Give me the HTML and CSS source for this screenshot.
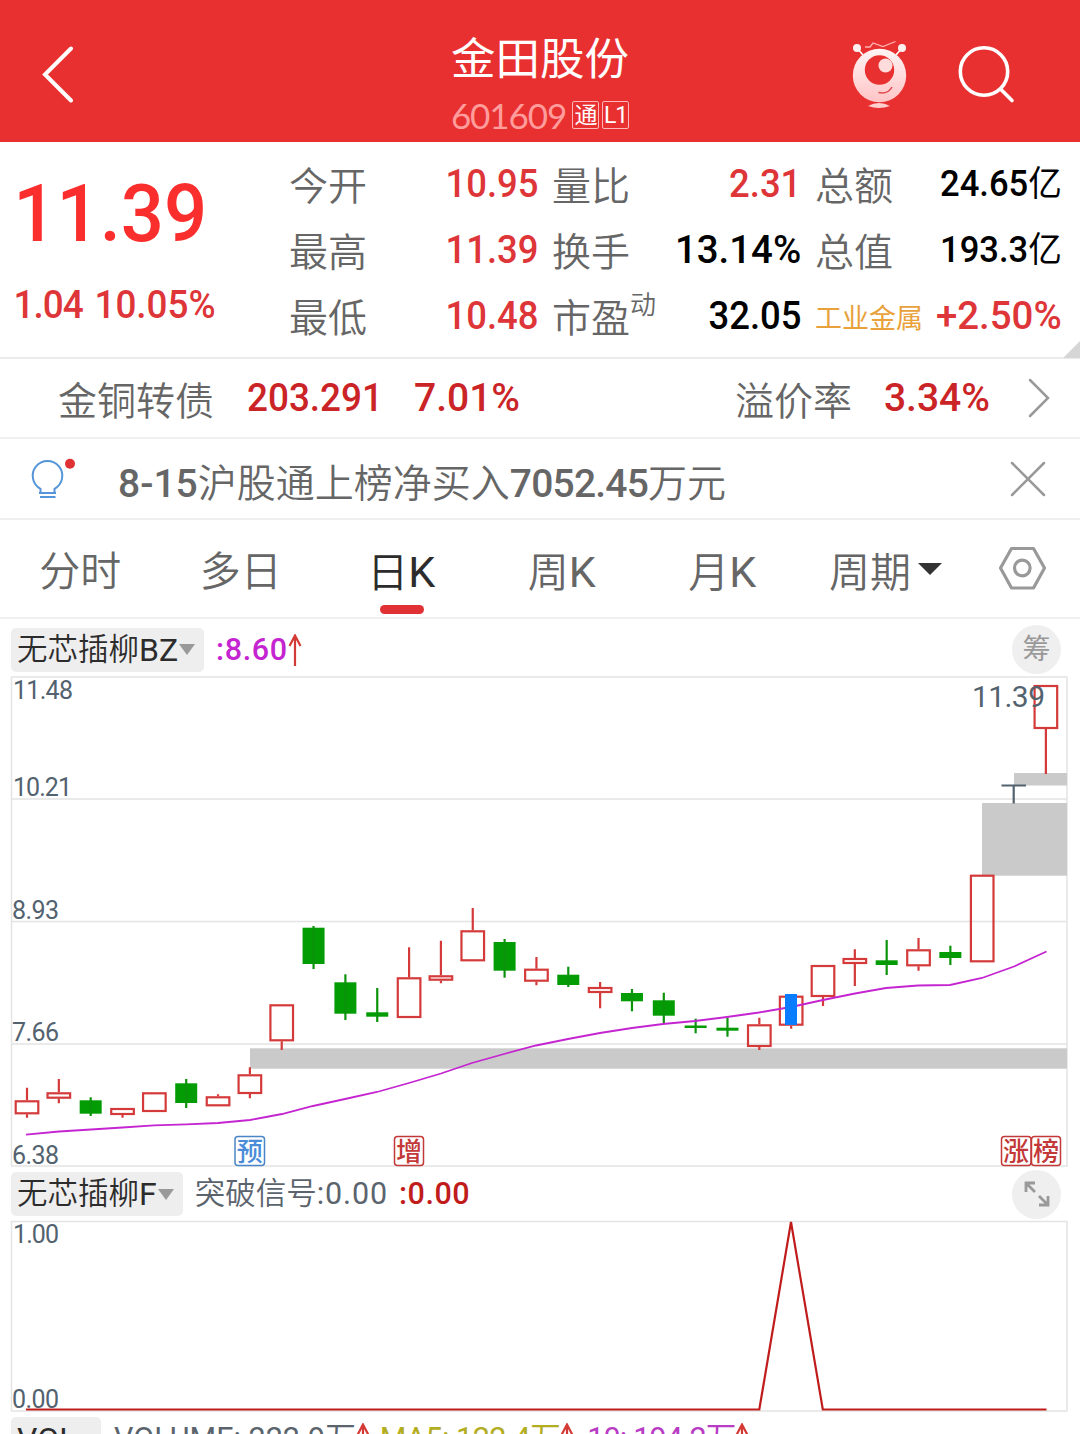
FILE: index.html
```
<!DOCTYPE html>
<html lang="zh-CN">
<head>
    <meta charset="utf-8">
    <title>金田股份 601609</title>
    <link rel="stylesheet" href="styles.css">
</head>
<body>
<div class="app">
    <header class="topbar">
        <svg class="back" width="34" height="60" viewBox="0 0 34 60"><path d="M31 5.500 L5 31.500 L31 57.500"/></svg>
        <div class="title">
            <div class="name">金田股份</div>
            <div class="code"><span class="code-num">601609</span><span class="tag">通</span><span class="tag">L1</span></div>
        </div>
        <div class="tools">
            <svg width="60" height="72" viewBox="850 38 60 72">
                <defs>
                    <linearGradient id="face" x1="0" y1="0" x2="0" y2="1">
                        <stop offset="0" stop-color="#fff4f4"/>
                        <stop offset="1" stop-color="#ffc4c6"/>
                    </linearGradient>
                </defs>
                <path d="M865 47 L870 47 L873 43 L883 46.5 L895.5 41.5" fill="none" stroke="#ffb3b3" stroke-width="1.3"/>
                <path d="M857 48 L863 55 M902 48 L896 55" stroke="#fff" stroke-width="1.6"/>
                <circle cx="857" cy="48" r="4" fill="#fff0f0"/>
                <circle cx="902" cy="48" r="4" fill="#fff0f0"/>
                <circle cx="879.5" cy="75.5" r="26.7" fill="url(#face)"/>
                <circle cx="879.5" cy="70" r="14.7" fill="#e93030"/>
                <circle cx="885.5" cy="65.5" r="7" fill="#ffdcdc"/>
                <path d="M878.5 92.5 Q888 94.5 892 87" fill="none" stroke="#e04a4c" stroke-width="1.5"/>
                <path d="M868 106 Q879 100 890 106 Q879 110 868 106" fill="#ffcfd0"/>
            </svg>
            <svg width="62" height="62" viewBox="955 42 62 62" class="search"><circle cx="984" cy="71.5" r="23.7"/><path d="M1000.5 89 L1012 100.5"/></svg>
        </div>
    </header>

    <section class="quote">
        <div class="price">
            <div class="last">11.39</div>
            <div class="change"><span class="diff">1.04</span><span>10.05%</span></div>
        </div>
        <div class="grid">
            <div class="cell"><span>今开</span><b class="up">10.95</b></div>
            <div class="cell"><span>量比</span><b class="up">2.31</b></div>
            <div class="cell"><span>总额</span><b class="small">24.65<i>亿</i></b></div>
            <div class="cell"><span>最高</span><b class="up">11.39</b></div>
            <div class="cell"><span>换手</span><b class="pct">13.14%</b></div>
            <div class="cell"><span>总值</span><b class="small">193.3<i>亿</i></b></div>
            <div class="cell"><span>最低</span><b class="up">10.48</b></div>
            <div class="cell"><span>市盈<sup>动</sup></span><b>32.05</b></div>
            <div class="cell"><span class="industry">工业金属</span><b class="up pct">+2.50%</b></div>
        </div>
        <div class="corner"></div>
    </section>

    <section class="bond">
        <span>金铜转债</span>
        <b class="bond-price">203.291</b>
        <b class="bond-rate">7.01%</b>
        <span class="premium">溢价率</span>
        <b class="premium-num">3.34%</b>
        <svg width="24" height="42" viewBox="0 0 24 42"><path d="M3 3 L21 21 L3 39"/></svg>
    </section>

    <section class="notice">
        <svg width="46" height="44" viewBox="30 456 46 44">
            <path d="M40.500 491.500 V487.800 A14.800 14.800 0 1 1 54.500 487.800 V491.500 M39 492 H56 M40 496 H55.500" fill="none" stroke="#5595d9" stroke-width="2"/>
            <circle cx="70" cy="462.700" r="5" fill="#e03235"/>
        </svg>
        <p><b>8-15</b>沪股通上榜净买入<b class="amount">7052.45</b>万元</p>
        <svg class="close" width="38" height="38" viewBox="0 0 38 38"><path d="M3 3 L35 35 M35 3 L3 35"/></svg>
    </section>

    <nav class="tabs">
        <span>分时</span>
        <span>多日</span>
        <span class="active">日<b>K</b></span>
        <span>周<b>K</b></span>
        <span>月<b>K</b></span>
        <span class="period">周期<svg width="24" height="12" viewBox="0 0 24 12"><path d="M0 0 H24 L12 12 Z" fill="#333"/></svg></span>
        <svg class="gear" width="50" height="46" viewBox="997 545 50 46"><path d="M1011.500 548.500 H1033.500 L1044.500 568 L1033.500 588 H1011.500 L1000.500 568 Z"/><circle cx="1022.300" cy="568" r="7.800"/></svg>
    </nav>

    <div class="indicator">
        <span class="pill">无芯插柳<b>BZ</b><i></i></span>
        <b class="ma">:8.60</b>
        <svg class="arrow" width="14" height="32" viewBox="0 0 14 32"><path d="M7 32 V2 M1.500 12 L7 1.500 L12.500 12"/></svg>
        <span class="round">筹</span>
    </div>

    <svg class="chart" width="1080" height="491" viewBox="0 676 1080 491">
        <g class="frame">
            <path d="M11.500 677 V1166 H1067 V677 Z M11 799 H1067 M11 921.500 H1067 M11 1044 H1067"/>
        </g>
        <g fill="#cacaca">
            <rect x="250" y="1048.300" width="817" height="20.400"/>
            <rect x="982" y="803" width="85" height="72.700"/>
            <rect x="1014" y="773" width="53" height="12.500"/>
        </g>
        <g id="candles"></g>
        <path d="M1001.500 785.500 H1026 M1013.700 785.500 V803.500" stroke="#53626f" stroke-width="2.200"/>
        <path class="ma-line" d="M26 1134.700 L59 1131.500 91 1129.500 122.500 1127.500 154 1125.300 186 1124.300 218 1123 250 1120 282 1114 313 1106 345 1099 377 1092 409 1083 441 1073.500 472 1063 504 1054 536 1045.500 568 1039 600 1033 632 1028 663 1024 695 1021 727 1017 759 1012.500 791 1007 823 1000 855 993.500 886 988 918 985.500 950 985 982 978 1014 966.500 1046.500 951.500"/>
        <rect x="785" y="994" width="12" height="31" fill="#0a7cff"/>
        <g class="axis">
            <text x="13" y="699" textLength="60">11.48</text>
            <text x="13" y="796" textLength="59">10.21</text>
            <text x="12" y="919" textLength="47">8.93</text>
            <text x="12" y="1041" textLength="47">7.66</text>
            <text x="12" y="1164" textLength="47">6.38</text>
            <text x="972" y="706.500" textLength="73" class="peak">11.39</text>
        </g>
        <g class="marks">
            <rect class="blue" x="235" y="1136.500" width="29.500" height="29" rx="3"/><text class="blue" x="249.700" y="1160.500">预</text>
            <rect x="394.500" y="1136.500" width="29" height="29" rx="3"/><text x="409" y="1160.500">增</text>
            <rect x="1001.500" y="1136.500" width="29.500" height="29" rx="3"/><text x="1016" y="1160.500">涨</text>
            <rect x="1031.500" y="1136.500" width="29" height="29" rx="3"/><text x="1046" y="1160.500">榜</text>
        </g>
    </svg>

    <div class="indicator second">
        <span class="pill">无芯插柳<b>F</b><i></i></span>
        <span class="signal">突破信号<b>:0.00</b></span>
        <b class="zero">:0.00</b>
        <span class="round"><svg width="28" height="28" viewBox="0 0 28 28"><path d="M3 12 V3 H12 M4 4 L12 12 M25 16 V25 H16 M24 24 L16 16"/></svg></span>
    </div>

    <svg class="chart" width="1080" height="191" viewBox="0 1221 1080 191">
        <g class="frame"><path d="M11.500 1221.500 H1067 V1411 H11.500 Z"/></g>
        <g class="axis">
            <text x="13" y="1242.700" textLength="46">1.00</text>
            <text x="12" y="1407.500" textLength="47">0.00</text>
        </g>
        <path d="M26 1409.500 H759.300 L791 1222 L822.800 1409.500 H1046.500" fill="none" stroke="#c01c1c" stroke-width="2.200"/>
    </svg>

    <div class="indicator volume">
        <span class="pill"><b>VOL</b></span>
        <span class="vol-text">VOLUME: 222.9万</span>
        <svg class="arrow" width="14" height="32" viewBox="0 0 14 32"><path d="M7 32 V2 M1.500 12 L7 1.500 L12.500 12"/></svg>
        <span class="vol-text ma5">MA5: 122.4万</span>
        <svg class="arrow" width="14" height="32" viewBox="0 0 14 32"><path d="M7 32 V2 M1.500 12 L7 1.500 L12.500 12"/></svg>
        <span class="vol-text ma10">10: 194.2万</span>
        <svg class="arrow" width="14" height="32" viewBox="0 0 14 32"><path d="M7 32 V2 M1.500 12 L7 1.500 L12.500 12"/></svg>
    </div>
</div>

<script>
    // direction, wick top, body top, body bottom, wick bottom
    const candles = [
        ["r", 1087.7, 1100.3, 1114.3, 1117.7],
        ["r", 1079, 1092.3, 1098.7, 1103.3],
        ["g", 1097.3, 1100.3, 1113.7, 1116],
        ["r", 1108, 1108, 1115, 1117.7],
        ["r", 1092.3, 1092.3, 1112, 1112],
        ["g", 1079, 1083.3, 1103, 1108],
        ["r", 1094.3, 1096.3, 1106.3, 1106.3],
        ["r", 1067.3, 1074.3, 1094, 1098.3],
        ["r", 1004.3, 1004.3, 1041.3, 1050],
        ["g", 926, 927.7, 964, 969],
        ["g", 974.3, 982.3, 1013.7, 1020],
        ["g", 988, 1012.3, 1016.7, 1022],
        ["r", 947.3, 977.3, 1018, 1018],
        ["r", 940.7, 975.3, 980.7, 983.3],
        ["r", 908, 930.3, 961.3, 961.3],
        ["g", 939, 942, 970.7, 977.7],
        ["r", 957, 968.7, 981.7, 985.3],
        ["g", 966.7, 974.7, 985, 987],
        ["r", 982, 987, 993, 1008.3],
        ["g", 989, 993, 1001.3, 1011.3],
        ["g", 992.7, 1000.3, 1015.7, 1023.3],
        ["g", 1018.7, 1025.5, 1028, 1033.3],
        ["g", 1018, 1027.7, 1030.7, 1036.7],
        ["r", 1017.7, 1024.3, 1047, 1050],
        ["r", 995.7, 995.7, 1025.7, 1028.7],
        ["r", 965, 965, 997, 1006],
        ["r", 949.3, 958, 964, 986],
        ["g", 940, 960.3, 965, 975],
        ["r", 938, 949.3, 966.3, 970.7],
        ["g", 945.7, 952, 958, 965],
        ["r", 874.7, 874.7, 962.3, 962.3],
        null,
        ["r", 685, 685, 729, 774]
    ];
    let out = "";
    candles.forEach((c, i) => {
        if (!c) return;
        const x = 27 + i * 31.84;
        const [dir, high, top, bottom, low] = c;
        if (dir === "g") {
            out += `<rect class="down" x="${x - 11}" y="${top}" width="22" height="${bottom - top}"/>`;
            out += `<path class="wick down" d="M${x} ${high} V${low}"/>`;
        } else {
            out += `<path class="wick" d="M${x} ${high} V${top} M${x} ${bottom} V${low}"/>`;
            out += `<rect class="rise" x="${x - 11.3}" y="${top + 1}" width="22.6" height="${bottom - top - 2}"/>`;
        }
    });
    document.getElementById("candles").innerHTML = out;
</script>
</body>
</html>
```
FILE: styles.css
```
* {
    box-sizing: border-box;
}

body {
    margin: 0;
    background: #fff;
    font-family: Roboto, "Noto Sans CJK SC", sans-serif;
    font-weight: 350;
    color: #666;
}

b {
    font-weight: 500;
}

i {
    font-style: normal;
}

svg {
    display: block;
    flex: none;
}

.app {
    width: 1080px;
    height: 1434px;
    overflow: hidden;
}

.topbar {
    height: 142px;
    background: #e83030;
    display: grid;
    grid-template-columns: 400px 280px 400px;
    color: #fff;
}

.back {
    margin: 43px 0 0 40px;
    fill: none;
    stroke: #fff;
    stroke-width: 4;
    stroke-linecap: round;
}

.title {
    display: flex;
    flex-direction: column;
    align-items: center;
    padding-top: 29px;
}

.name {
    font-size: 44.5px;
    line-height: 62px;
    font-weight: 400;
}

.code {
    display: flex;
    align-items: center;
    height: 48px;
    gap: 3px;
}

.code-num {
    font-family: Lato, sans-serif;
    font-weight: 400;
    font-size: 35px;
    letter-spacing: -1.1px;
    color: #ff9c9c;
    margin-right: 3px;
}

.tag {
    width: 27px;
    height: 28px;
    border: 1px solid #ffb5b5;
    border-radius: 2px;
    font-size: 23px;
    line-height: 27px;
    text-align: center;
    font-weight: 400;
    letter-spacing: -1px;
}

.tools {
    display: flex;
    gap: 45px;
    padding: 38px 0 0 170px;
}

.search {
    margin-top: 4px;
    fill: none;
    stroke: #fff;
    stroke-width: 3.6;
    stroke-linecap: round;
}

.quote {
    height: 217px;
    display: flex;
    border-bottom: 2px solid #ebebeb;
    position: relative;
}

.price {
    width: 289px;
    color: #fb2e2e;
    font-weight: 500;
}

.last {
    font-size: 80px;
    line-height: 100px;
    padding: 22px 0 0 14px;
    transform: scaleX(.95);
    transform-origin: left;
}

.change {
    display: flex;
    gap: 12px;
    font-size: 38px;
    line-height: 60px;
    padding: 11px 0 0 14px;
    color: #de3539;
    transform: scaleX(.97);
    transform-origin: left;
}

.change .diff {
    letter-spacing: -1px;
}

.grid {
    display: grid;
    grid-template-columns: 249px 249px 247px;
    grid-auto-rows: 66px;
    column-gap: 14px;
    padding-top: 9px;
}

.cell {
    display: flex;
    justify-content: space-between;
    font-size: 39px;
    line-height: 66px;
    white-space: nowrap;
}

.cell span {
    padding-top: 3px;
}

.cell b {
    color: #000;
    transform: scaleX(.935);
    transform-origin: right;
}

.cell b.pct {
    transform: scaleX(.985);
}

.cell b.up {
    color: #de3539;
}

.cell b.small {
    font-size: 36px;
    transform: scaleX(.96);
}

.small i {
    font-size: 35px;
    font-weight: 400;
}

.cell sup {
    font-size: 26px;
    line-height: 0;
    vertical-align: 18px;
}

.cell .industry {
    font-size: 27px;
    font-weight: 400;
    color: #e9a13b;
}

.corner {
    position: absolute;
    right: 0;
    bottom: -1px;
    border-left: 17px solid transparent;
    border-bottom: 17px solid #d6d6d6;
}

.bond {
    height: 80px;
    border-bottom: 2px solid #f0f0f0;
    display: flex;
    align-items: center;
    font-size: 39px;
    padding: 0 29px 0 58px;
}

.bond b {
    color: #cb2427;
    transform-origin: left;
}

.bond .bond-price {
    width: 134px;
    margin: 0 33px;
    transform: scaleX(.945);
}

.premium {
    margin-left: auto;
}

.premium-num {
    margin: 0 37px 0 32px;
}

.bond path,
.close path {
    fill: none;
    stroke: #999;
    stroke-width: 2.5;
    stroke-linecap: round;
}

.notice {
    height: 81px;
    border-bottom: 2px solid #f0f0f0;
    display: flex;
    align-items: center;
    padding: 0 33px 0 30px;
}

.notice p {
    margin: 10px auto 0 42px;
    font-size: 39px;
    line-height: 60px;
    white-space: nowrap;
}

.notice .amount {
    letter-spacing: -.8px;
}

.tabs {
    height: 99px;
    border-bottom: 2px solid #f0f0f0;
    display: grid;
    grid-template-columns: 160.500px 160.500px 160.500px 160.500px 160.500px 166px 112px;
    font-size: 41px;
    line-height: 89px;
    text-align: center;
}

.tabs span {
    padding-top: 8px;
}

.tabs b {
    font-weight: 400;
    font-size: 43px;
}

.tabs .active {
    color: #2c2c2c;
    position: relative;
}

.active::after {
    content: "";
    position: absolute;
    left: 59px;
    bottom: 4px;
    width: 44px;
    height: 9px;
    border-radius: 5px;
    background: #e03235;
}

.period {
    display: flex;
    justify-content: center;
    align-items: center;
    gap: 7px;
}

.period svg {
    margin-bottom: 9px;
}

.gear {
    margin: 25px 0 0 28px;
    fill: none;
    stroke: #999;
    stroke-width: 3.2;
    stroke-linejoin: round;
}

.indicator {
    height: 57px;
    padding: 4px 19px 0 11px;
    display: flex;
    align-items: center;
    font-size: 30.500px;
    line-height: 44px;
    white-space: nowrap;
}

.pill {
    height: 44px;
    background: #eee;
    border-radius: 5px;
    padding: 0 9px 0 6px;
    color: #2c2c2c;
    display: flex;
    align-items: center;
}

.pill b {
    font-weight: 400;
    font-size: 32px;
}

.pill i {
    margin-left: 1px;
    border: 8.500px solid transparent;
    border-top: 11px solid #999;
    border-bottom: 0;
}

.ma {
    margin-left: 12px;
    letter-spacing: .6px;
    color: #c425d0;
}

.arrow {
    fill: none;
    stroke: #d43a35;
    stroke-width: 2.200;
}

.round {
    width: 49px;
    height: 49px;
    margin-left: auto;
    border-radius: 50%;
    background: #efefef;
    color: #999;
    display: flex;
    align-items: center;
    justify-content: center;
    font-size: 28px;
    line-height: 53px;
    font-weight: 400;
}

.round svg {
    fill: none;
    stroke: #999;
    stroke-width: 2.800;
}

.second {
    height: 54px;
    padding-top: 0;
}

.signal {
    margin-left: 12px;
    color: #5b646d;
}

.signal b {
    font-weight: 400;
    letter-spacing: .9px;
}

.zero {
    margin-left: 11px;
    letter-spacing: .5px;
    color: #c01c1c;
}

.chart {
    overflow: visible;
}

.frame {
    fill: none;
    stroke: #e4e4e4;
    stroke-width: 1.500;
}

.wick {
    stroke: #d43a3a;
    stroke-width: 2.200;
}

.rise {
    fill: none;
    stroke: #d43a3a;
    stroke-width: 2.200;
}

.down {
    fill: #049c04;
}

.wick.down {
    stroke: #0b930b;
}

.ma-line {
    fill: none;
    stroke: #c425d0;
    stroke-width: 1.800;
}

.axis {
    font-size: 25px;
    font-weight: 400;
    fill: #53626f;
}

.axis .peak {
    font-size: 30px;
}

.marks {
    font-size: 26px;
    font-weight: 500;
    text-anchor: middle;
}

.marks rect {
    fill: #fff;
    stroke: #c33838;
    stroke-width: 1.500;
}

.marks text {
    fill: #c33838;
}

.marks rect.blue {
    stroke: #4a86c5;
}

.marks text.blue {
    fill: #4a8cd8;
}

.volume {
    height: 54px;
    padding-top: 0;
}

.volume .pill {
    width: 90px;
}

.vol-text {
    margin-left: 13px;
    font-weight: 400;
    color: #5b646d;
}

.vol-text.ma5 {
    margin-left: 10px;
    letter-spacing: -.5px;
    color: #b3ad22;
}

.vol-text.ma10 {
    letter-spacing: -.8px;
    color: #b83cc4;
}
```
